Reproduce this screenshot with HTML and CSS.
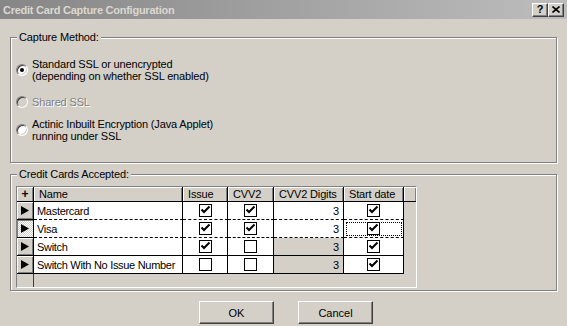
FILE: index.html
```html
<!DOCTYPE html>
<html lang="en">
<head>
  <meta charset="UTF-8">
  <title>Credit Card Capture Configuration</title>
  <link rel="stylesheet" href="styles.css">
</head>
<body>
  <div class="window">
    <div class="titlebar">
      <span class="title">Credit Card Capture Configuration</span>
      <div class="title-buttons">
        <span class="tbtn help">?</span>
        <span class="tbtn close">
          <svg width="8" height="7" viewBox="0 0 8 7"><path d="M0.5 0.5 L7.5 6.5 M7.5 0.5 L0.5 6.5" stroke="#000" stroke-width="1.6"/></svg>
        </span>
      </div>
    </div>

    <div class="content">
      <div class="group capture">
        <span class="group-title">Capture Method:</span>
        <label class="option opt1">
          <span class="radio checked"></span>
          <span>Standard SSL or unencrypted<br>(depending on whether SSL enabled)</span>
        </label>
        <label class="option opt2 disabled">
          <span class="radio"></span>
          <span>Shared SSL</span>
        </label>
        <label class="option opt3">
          <span class="radio"></span>
          <span>Actinic Inbuilt Encryption (Java Applet)<br>running under SSL</span>
        </label>
      </div>

      <div class="group cards">
        <span class="group-title">Credit Cards Accepted:</span>
        <div class="grid">
          <table>
            <colgroup>
              <col style="width:17px">
              <col style="width:149px">
              <col style="width:45px">
              <col style="width:46px">
              <col style="width:70px">
              <col style="width:60px">
              <col style="width:12px">
            </colgroup>
            <thead>
              <tr>
                <th class="ind plus">+</th>
                <th>Name</th>
                <th>Issue</th>
                <th>CVV2</th>
                <th>CVV2 Digits</th>
                <th>Start date</th>
                <th class="stub"></th>
              </tr>
            </thead>
            <tbody id="cardRows">
              <!-- rows built below -->
            </tbody>
          </table>
        </div>
      </div>

      <div class="buttons">
        <button class="btn">OK</button>
        <button class="btn">Cancel</button>
      </div>
    </div>
  </div>

  <script>
    const cards = [
      { name: 'Mastercard', issue: true, cvv2: true, digits: 3, start: true, editable: true },
      { name: 'Visa', issue: true, cvv2: true, digits: 3, start: true, editable: true, current: true },
      { name: 'Switch', issue: true, cvv2: false, digits: 3, start: true },
      { name: 'Switch With No Issue Number', issue: false, cvv2: false, digits: 3, start: true }
    ];

    const tick = '<svg width="11" height="11" viewBox="0 0 11 11"><path d="M1.5 4.5 L4 7 L9.5 1.5" fill="none" stroke="#000" stroke-width="2"/></svg>';
    const arrow = '<svg width="8" height="9" viewBox="0 0 8 9"><path d="M0 0 L8 4.5 L0 9 Z" fill="#000"/></svg>';

    function checkbox(on) {
      return `<span class="check">${on ? tick : ''}</span>`;
    }

    const body = document.getElementById('cardRows');
    cards.forEach((card, i) => {
      const row = document.createElement('tr');
      if (card.current) row.className = 'current';
      if (cards[i + 1] && cards[i + 1].current) row.classList.add('before-current');
      row.innerHTML = `
        <td class="ind">${arrow}</td>
        <td class="name">${card.name}</td>
        <td class="center">${checkbox(card.issue)}</td>
        <td class="center">${checkbox(card.cvv2)}</td>
        <td class="digits ${card.editable ? '' : 'readonly'}">${card.digits}</td>
        <td class="center start">${checkbox(card.start)}</td>
      `;
      body.appendChild(row);
    });
  </script>
</body>
</html>
```

FILE: styles.css
```css
* {
  box-sizing: border-box;
}

body {
  margin: 0;
  background-color: #d4d0c8;
  font-family: 'Liberation Sans', Arial, sans-serif;
  font-size: 11px;
  letter-spacing: -0.15px;
  color: #000;
}

.window {
  width: 567px;
  height: 326px;
  overflow: hidden;
}

/* title bar */
.titlebar {
  height: 19px;
  display: flex;
  align-items: center;
  justify-content: space-between;
  padding: 0 3px 0 3px;
  background: linear-gradient(to right, #868686, #bdbdbd);
}

.title {
  color: #dcd8d0;
  font-weight: bold;
  font-size: 11px;
  letter-spacing: -0.25px;
}

.title-buttons {
  display: flex;
}

.tbtn {
  width: 16px;
  height: 14px;
  display: flex;
  align-items: center;
  justify-content: center;
  background-color: #d4d0c8;
  border: 1px solid;
  border-color: #fff #404040 #404040 #fff;
  box-shadow: inset -1px -1px 0 #808080;
  font-weight: bold;
  font-size: 11px;
  line-height: 1;
}

/* group boxes */
.content {
  padding: 18px 10px 0 10px;
}

.group {
  position: relative;
  width: 547px;
  border: 1px solid #808080;
  box-shadow: inset 1px 1px 0 #fff, 1px 1px 0 #fff;
}

.group-title {
  position: absolute;
  top: -7px;
  left: 6px;
  padding: 0 2px;
  line-height: 12px;
  background-color: #d4d0c8;
}

.capture {
  height: 126px;
  padding: 20px 0 0 5px;
}

.option {
  display: flex;
  align-items: center;
  gap: 4px;
  line-height: 12px;
}

.opt2 {
  margin-top: 14px;
}

.opt3 {
  margin-top: 10px;
}

.option.disabled {
  color: #808080;
  text-shadow: 1px 1px 0 #fff;
}

.radio {
  position: relative;
  flex: none;
  width: 12px;
  height: 12px;
  border-radius: 50%;
  background-color: #fff;
  border: 1px solid;
  border-color: #808080 #fff #fff #808080;
  box-shadow: inset 1px 1px 0 #404040, inset -1px -1px 0 #d4d0c8;
}

.option.disabled .radio {
  background-color: #d4d0c8;
}

.radio.checked::after {
  content: '';
  position: absolute;
  left: 3px;
  top: 3px;
  width: 4px;
  height: 4px;
  border-radius: 50%;
  background-color: #000;
}

.cards {
  margin-top: 11px;
  height: 117px;
  padding: 11px 0 0 5px;
}

/* grid */
.grid {
  width: 401px;
  height: 102px;
  border: 1px solid;
  border-color: #808080 #fff #fff #808080;
  background:
    linear-gradient(#404040, #404040) 16px 0 / 1px 100% no-repeat,
    #d4d0c8;
}

.grid table {
  table-layout: fixed;
  border-collapse: separate;
  border-spacing: 0;
  width: 399px;
}

.grid th,
.grid td {
  padding: 0;
  border-right: 1px solid #000;
  border-bottom: 1px solid #000;
  white-space: nowrap;
  overflow: hidden;
}

.grid th {
  height: 15px;
  padding-left: 5px;
  text-align: left;
  font-weight: normal;
  line-height: 12px;
  background-color: #d4d0c8;
  box-shadow: inset 1px 1px 0 #fff, inset -1px 0 0 #808080;
}

.grid th.plus {
  padding: 0;
  text-align: center;
  font-weight: bold;
  font-size: 12px;
}

.grid th.stub {
  border-right: none;
}

.grid td {
  height: 18px;
  line-height: 12px;
  background-color: #fff;
}

.grid td.ind {
  text-align: center;
  background-color: #d4d0c8;
  box-shadow: inset 1px 1px 0 #fff, inset -1px -1px 0 #808080;
}

.grid td.ind svg {
  display: block;
  margin: 0 auto;
}

.grid td.name {
  padding-left: 3px;
  letter-spacing: -0.3px;
}

.grid td.center {
  text-align: center;
}

.grid td.digits {
  text-align: right;
  padding-right: 4px;
}

.grid td.readonly {
  background-color: #d4d0c8;
}

.check {
  display: inline-block;
  vertical-align: middle;
  width: 13px;
  height: 13px;
  border: 1px solid #000;
  background-color: #fff;
}

.check svg {
  display: block;
}

/* focused row */
tr.before-current td:not(.ind) {
  border-bottom-style: dashed;
}

tr.current td:not(.ind) {
  border-bottom-style: dashed;
}

tr.current td.ind {
  background: repeating-conic-gradient(#fff 0 25%, #d4d0c8 0 50%) 0 0 / 2px 2px;
  box-shadow: inset 1px 1px 0 #808080;
}

tr.current td.start {
  outline: 1px dotted #000;
  outline-offset: -3px;
}

/* buttons */
.buttons {
  display: flex;
  justify-content: center;
  gap: 24px;
  margin-top: 10px;
  padding-left: 5px;
}

.btn {
  width: 75px;
  height: 23px;
  padding: 0;
  font-family: 'Liberation Sans', Arial, sans-serif;
  font-size: 11px;
  color: #000;
  background-color: #d4d0c8;
  border: 1px solid;
  border-color: #fff #404040 #404040 #fff;
  box-shadow: inset -1px -1px 0 #808080;
}
```
